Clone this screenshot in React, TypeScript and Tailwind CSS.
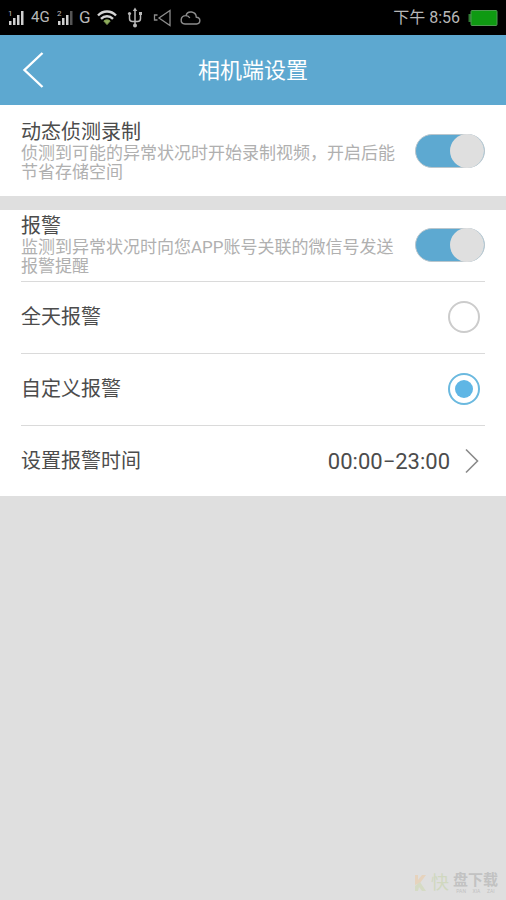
import type { ReactNode } from "react";

function Signal({ sim, weak }: { sim: string; weak?: boolean }) {
  return (
    <svg width="16" height="18" viewBox="0 0 16 18" className="shrink-0" aria-hidden="true">
      <text x="0" y="7" fontSize="8" fontFamily="Roboto" fill="#bdbdbd">{sim}</text>
      <rect x="1" y="12" width="2.5" height="4" fill="#d0d0d0" />
      <rect x="5" y="9" width="2.5" height="7" fill="#d0d0d0" />
      <rect x="9" y="6" width="2.5" height="10" fill="#d0d0d0" />
      <rect x="13" y="2" width="2.5" height="14" fill={weak ? "#555" : "#d0d0d0"} />
    </svg>
  );
}

function StatusBar() {
  return (
    <div className="flex h-[35px] items-center bg-black px-2 text-[#b8b8b8]">
      <Signal sim="1" />
      <span className="ml-[7px] w-[26px] text-[15px]">4G</span>
      <Signal sim="2" weak />
      <span className="ml-[6px] text-[17px]">G</span>

      {/* wifi */}
      <svg width="20" height="18" viewBox="0 0 20 18" className="ml-[6px] shrink-0" fill="none" strokeWidth="2.4" aria-hidden="true">
        <path d="M1 6.5C6 1.2 14 1.2 19 6.5" stroke="#d4d4d4" />
        <path d="M4 9.8C7.4 6.4 12.6 6.4 16 9.8" stroke="#d4d4d4" />
        <path d="M6.8 12C8.5 10.4 11.5 10.4 13.2 12L10 15.6Z" fill="#8fae5c" stroke="#7f9a52" strokeWidth="1" />
      </svg>

      {/* usb */}
      <svg width="16" height="22" viewBox="0 0 16 22" className="ml-[10px] shrink-0" fill="none" stroke="#b8b8b8" strokeWidth="1.5" aria-hidden="true">
        <path d="M8 2V18M2.5 7V11.5Q2.5 14.5 5.5 14.5H10.5Q13.5 14.5 13.5 11.5V7" />
        <path d="M8 0.5L10.2 4H5.8Z" fill="#b8b8b8" stroke="none" />
        <circle cx="2.5" cy="6.5" r="1.6" fill="#b8b8b8" stroke="none" />
        <rect x="12" y="5" width="3" height="3" fill="#b8b8b8" stroke="none" />
        <circle cx="8" cy="18.5" r="2" fill="#b8b8b8" stroke="none" />
      </svg>

      {/* speaker */}
      <svg width="19" height="18" viewBox="0 0 19 18" className="ml-[10px] shrink-0" fill="none" stroke="#8c8c8c" strokeWidth="1.3" aria-hidden="true">
        <path d="M17 1.5V16.5L6 9Z" />
        <path d="M4.5 6H1.5V11H4.5" />
      </svg>

      {/* cloud */}
      <svg width="21" height="16" viewBox="0 0 21 16" className="ml-2 shrink-0" fill="none" stroke="#8c8c8c" strokeWidth="1.4" aria-hidden="true">
        <path d="M5 14H16.5C21 13.5 21 7.5 16.3 7.2C16 1.2 7.5 0 6 5.6C0 5.6 -0.5 13.4 5 14Z" />
        <path d="M6 5.6C7.8 5.6 9 6.4 9.8 8" />
      </svg>

      <span className="ml-auto text-base">下午 8:56</span>
      <svg width="30" height="18" viewBox="0 0 30 18" className="ml-2 shrink-0" aria-hidden="true">
        <rect x="0.5" y="5" width="3" height="8" fill="#2f7a33" />
        <rect x="3" y="1.5" width="26" height="15" rx="1" fill="#0f9a12" stroke="#4f9a52" />
      </svg>
    </div>
  );
}

function Toggle({ id }: { id: string }) {
  return (
    <input
      id={id}
      type="checkbox"
      role="switch"
      defaultChecked
      className="flex h-[34px] w-[70px] shrink-0 cursor-pointer appearance-none items-center rounded-full border border-[#b9c6cd] bg-[#d0d0d0]
      before:size-[34px] before:rounded-full before:bg-[#dfdfdf] checked:justify-end checked:bg-[#5da9d1]"
    />
  );
}

type SwitchRowProps = {
  id: string;
  title: string;
  children: ReactNode;
};

function SwitchRow({ id, title, children }: SwitchRowProps) {
  return (
    <div className="flex items-center justify-between gap-4">
      <label htmlFor={id} className="flex flex-col">
        <span className="text-xl leading-6">{title}</span>
        <span className="text-[17px] leading-[19px] text-[#b0b0b0]">{children}</span>
      </label>
      <Toggle id={id} />
    </div>
  );
}

function RadioRow({ id, title, checked }: { id: string; title: string; checked?: boolean }) {
  return (
    <div className="flex h-[72px] items-center justify-between border-b border-[#dadada] pr-[5px] pb-[2px]">
      <label htmlFor={id} className="text-xl">{title}</label>
      <input
        id={id}
        type="radio"
        name="alarm-mode"
        defaultChecked={checked}
        className="grid size-8 cursor-pointer appearance-none place-items-center rounded-full border-2 border-[#cccccc]
        before:size-[18px] before:rounded-full checked:border-[#6bb9df] checked:before:bg-[#5fb6e5]"
      />
    </div>
  );
}

export default function App() {
  return (
    <div className="flex min-h-screen flex-col bg-[#dfdfdf] font-[Roboto,'Noto_Sans_CJK_SC',sans-serif] text-[#4c4c4c]">
      <StatusBar />

      <header className="grid h-[70px] grid-cols-[1fr_auto_1fr] items-center bg-[#5da8d0] px-5 text-white">
        <button type="button" aria-label="返回" className="w-7 cursor-pointer">
          <svg width="28" height="38" viewBox="0 0 28 38" fill="none" stroke="currentColor" strokeWidth="2.4">
            <path d="M22.5 2L4.5 19L22.5 36" />
          </svg>
        </button>
        <h1 className="text-[22px]">相机端设置</h1>
      </header>

      <main>
        <section className="bg-white px-[21px] pt-[15px] pb-[14px]">
          <SwitchRow id="motion" title="动态侦测录制">
            侦测到可能的异常状况时开始录制视频，开启后能节省存储空间
          </SwitchRow>
        </section>

        <section className="mt-[14px] bg-white px-[21px]">
          <div className="border-b border-[#dadada] pt-1 pb-[5px]">
            <SwitchRow id="alarm" title="报警">
              监测到异常状况时向您APP账号关联的微信号发送报警提醒
            </SwitchRow>
          </div>
          <RadioRow id="all-day" title="全天报警" />
          <RadioRow id="custom" title="自定义报警" checked />
          <button type="button" className="flex h-[70px] w-full cursor-pointer items-center pr-[5px] text-left">
            <span className="grow text-xl">设置报警时间</span>
            <span className="text-[22px]">00:00−23:00</span>
            <svg width="16" height="26" viewBox="0 0 16 26" fill="none" stroke="#8a8a8a" strokeWidth="1.6" className="ml-[14px]" aria-hidden="true">
              <path d="M2 1.5L13.5 13L2 24.5" />
            </svg>
          </button>
        </section>
      </main>

      <footer className="mt-auto flex items-center justify-end gap-1 px-2 pb-[6px] text-[#c2c2c2]">
        <svg width="13" height="18" viewBox="0 0 13 18" aria-hidden="true">
          <path d="M1 1H4V6L8 1H12L6 9L1 11Z" fill="#e6d3bd" />
          <path d="M1 17V12L6 8L12 17H8L5 13L4 17Z" fill="#d5dbc4" />
        </svg>
        <span className="text-lg leading-5 text-[#d0d8bf]">快</span>
        <span className="flex flex-col">
          <span className="text-[15px] font-bold leading-4">盘下载</span>
          <span className="flex justify-around text-[5px] leading-[6px]">
            <span>PAN</span>
            <span>XIA</span>
            <span>ZAI</span>
          </span>
        </span>
      </footer>
    </div>
  );
}
